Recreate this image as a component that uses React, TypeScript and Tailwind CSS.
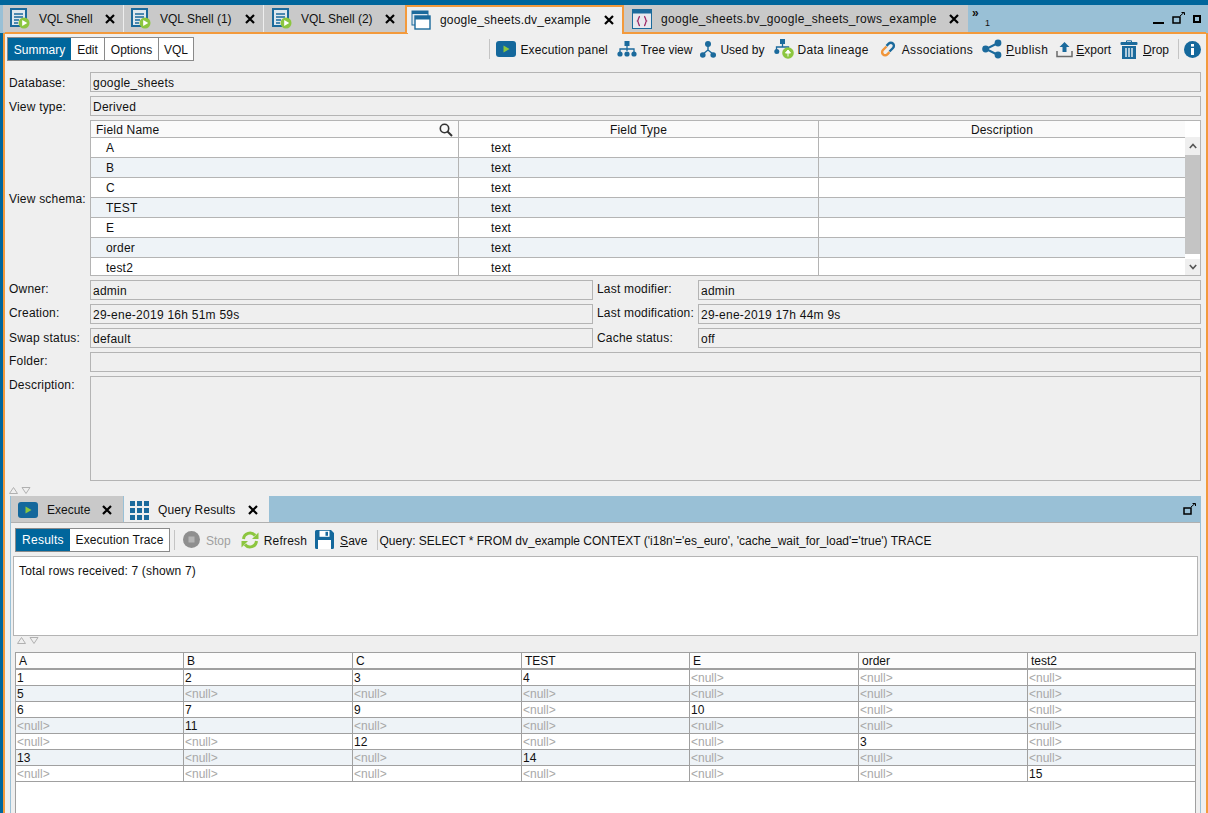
import type { ReactNode } from 'react';

const BLUE = '#1b6a9c';
const GREEN = '#8cc63f';

function ShellIcon() {
  return (
    <svg width="20" height="21" viewBox="0 0 20 21" className="shrink-0">
      <rect x="1" y="1" width="15" height="17" fill="#dfe8ee" stroke={BLUE} strokeWidth="2" />
      <path d="M4 6h9M4 9h9M4 12h5M4 15h4" stroke={BLUE} strokeWidth="1.6" />
      <circle cx="14" cy="15" r="5.5" fill={GREEN} />
      <path d="M12.2 12l5 3-5 3z" fill="#fff" />
    </svg>
  );
}

function ViewIcon() {
  return (
    <svg width="20" height="20" viewBox="0 0 20 20" className="shrink-0">
      <rect x="1" y="1" width="16" height="14" fill="#dce6ee" stroke={BLUE} strokeWidth="1" />
      <rect x="1" y="1" width="16" height="3" fill={BLUE} />
      <rect x="4" y="6" width="15" height="13" fill="#fff" stroke={BLUE} strokeWidth="1.4" />
      <rect x="4" y="6" width="15" height="3.5" fill={BLUE} />
    </svg>
  );
}

function BaseViewIcon() {
  return (
    <svg width="20" height="20" viewBox="0 0 20 20" className="shrink-0">
      <rect x="0.5" y="0.5" width="19" height="19" fill="#e8e8ee" stroke={BLUE} />
      <rect x="0.5" y="0.5" width="19" height="4" fill={BLUE} />
      <path d="M8 7.5c-2 0-1 3.500-2.500 4.500 1.500 1 .5 4.500 2.500 4.500M12 7.500c2 0 1 3.500 2.500 4.500-1.500 1-.5 4.500-2.500 4.500" fill="none" stroke="#a02a66" strokeWidth="1.3" />
    </svg>
  );
}

function PlayBox() {
  return (
    <svg width="20" height="16" viewBox="0 0 20 16" className="shrink-0">
      <rect width="20" height="16" rx="3" fill="#14689c" />
      <path d="M7.500 4.500l6 3.500-6 3.500z" fill={GREEN} />
    </svg>
  );
}

function TreeIcon() {
  return (
    <svg width="20" height="16" viewBox="0 0 20 16" className="shrink-0">
      <rect x="7.500" y="0" width="5" height="5" fill={BLUE} />
      <path d="M10 5v5M3 11V8h14v3" fill="none" stroke={BLUE} strokeWidth="1.300" />
      <circle cx="3" cy="13" r="2.600" fill={BLUE} />
      <circle cx="10" cy="13" r="2.600" fill={BLUE} />
      <circle cx="17" cy="13" r="2.600" fill={BLUE} />
    </svg>
  );
}

function UsedByIcon() {
  return (
    <svg width="16" height="17" viewBox="0 0 16 17" className="shrink-0">
      <circle cx="8" cy="3" r="3" fill={BLUE} />
      <path d="M8 5v4L3 13M8 9l5 4" fill="none" stroke={BLUE} strokeWidth="1.400" />
      <circle cx="2.800" cy="14" r="2.800" fill={BLUE} />
      <circle cx="13.200" cy="14" r="2.800" fill={BLUE} />
    </svg>
  );
}

function LineageIcon() {
  return (
    <svg width="20" height="20" viewBox="0 0 20 20" className="shrink-0">
      <rect x="6" y="0" width="5" height="5" fill={BLUE} />
      <path d="M8.500 5v3M2.500 11V8h12v2" fill="none" stroke={BLUE} strokeWidth="1.300" />
      <circle cx="2.800" cy="12.500" r="2.500" fill={BLUE} />
      <circle cx="14" cy="14" r="5.800" fill={GREEN} />
      <path d="M14 17.500v-5M11.500 14l2.500-3 2.500 3z" stroke="#fff" fill="#fff" strokeWidth="1" />
    </svg>
  );
}

function LinkIcon() {
  return (
    <svg width="18" height="18" viewBox="0 0 18 18" className="shrink-0">
      <path d="M7.500 6.500L4 10a3 3 0 0 0 4.300 4.300l2.200-2.200" fill="none" stroke="#f0953a" strokeWidth="2.400" />
      <path d="M10.500 11.500L14 8a3 3 0 0 0-4.300-4.300L7.500 5.900" fill="none" stroke={BLUE} strokeWidth="2.400" />
    </svg>
  );
}

function ShareIcon() {
  return (
    <svg width="20" height="20" viewBox="0 0 20 20" className="shrink-0">
      <path d="M16 4L4 10l12 6" fill="none" stroke={BLUE} strokeWidth="2" />
      <circle cx="16" cy="4" r="3.400" fill={BLUE} />
      <circle cx="3.600" cy="10" r="3.400" fill={BLUE} />
      <circle cx="16" cy="16" r="3.400" fill={BLUE} />
    </svg>
  );
}

function ExportIcon() {
  return (
    <svg width="17" height="17" viewBox="0 0 17 17" className="shrink-0">
      <path d="M8.500 1l5 5h-3v5h-4V6h-3z" fill={BLUE} />
      <path d="M1 10v5.500h15V10" fill="none" stroke="#6b6b6b" strokeWidth="1.500" />
    </svg>
  );
}

function TrashIcon() {
  return (
    <svg width="18" height="19" viewBox="0 0 18 19" className="shrink-0">
      <path d="M6.500 2V.8h5V2" fill="none" stroke={BLUE} />
      <rect x="0.500" y="2" width="17" height="3" rx="1" fill={BLUE} />
      <path d="M2 6h14v13H2z" fill={BLUE} />
      <path d="M6 8v9M9 8v9M12 8v9" stroke="#fff" strokeWidth="1.300" />
    </svg>
  );
}

function InfoIcon() {
  return (
    <svg width="17" height="17" viewBox="0 0 17 17" className="shrink-0">
      <circle cx="8.500" cy="8.500" r="8.500" fill="#14689c" />
      <rect x="7" y="3" width="3" height="2.600" fill="#fff" />
      <rect x="7" y="7" width="3" height="7" fill="#fff" />
    </svg>
  );
}

function CloseIcon() {
  return (
    <svg width="10" height="10" viewBox="0 0 10 10" className="shrink-0">
      <path d="M1 1l8 8M9 1l-8 8" stroke="#000" strokeWidth="2.200" />
    </svg>
  );
}

function GridIcon() {
  return (
    <svg width="19" height="19" viewBox="0 0 19 19" className="shrink-0">
      {[0, 7, 14].map(x =>
        [0, 7, 14].map(y => <rect key={`${x}-${y}`} x={x} y={y} width="5" height="5" fill={BLUE} />)
      )}
    </svg>
  );
}

function StopIcon() {
  return (
    <svg width="17" height="17" viewBox="0 0 17 17" className="shrink-0">
      <circle cx="8.500" cy="8.500" r="8.500" fill="#8f8f8f" />
      <rect x="5.500" y="5.500" width="6" height="6" fill="#b5b5b5" />
    </svg>
  );
}

function RefreshIcon() {
  return (
    <svg width="18" height="18" viewBox="0 0 18 18" className="shrink-0">
      <path d="M2.500 8A6.500 6.500 0 0 1 14 4.500" fill="none" stroke={GREEN} strokeWidth="3" />
      <path d="M17.500 1.500V8H11z" fill={GREEN} />
      <path d="M15.500 10A6.500 6.500 0 0 1 4 13.500" fill="none" stroke={GREEN} strokeWidth="3" />
      <path d="M.500 16.500V10H7z" fill={GREEN} />
    </svg>
  );
}

function SaveIcon() {
  return (
    <svg width="19" height="19" viewBox="0 0 19 19" className="shrink-0">
      <path d="M0 1.500A1.500 1.500 0 0 1 1.500 0H16l3 3v14.500a1.500 1.500 0 0 1-1.500 1.500h-16A1.500 1.500 0 0 1 0 17.500z" fill="#14689c" />
      <rect x="4.500" y="0.800" width="10" height="6" fill="#fff" />
      <rect x="10.500" y="1.800" width="2.500" height="4" fill="#14689c" />
      <rect x="3" y="10" width="13" height="9" fill="#fff" />
    </svg>
  );
}

function TabTriangles() {
  return (
    <svg width="22" height="7" viewBox="0 0 22 7">
      <path d="M.5 6.500L4.500.5l4 6zM13 .5h8l-4 6z" fill="none" stroke="#b0b0b0" />
    </svg>
  );
}

function UndockIcon() {
  return (
    <svg width="13" height="12" viewBox="0 0 13 12">
      <rect x="1" y="5" width="7" height="6" fill="none" stroke="#000" strokeWidth="1.500" />
      <path d="M8 4l4-3.500M9.500.5H12.500V3" fill="none" stroke="#000" />
    </svg>
  );
}

function Tab({
  className,
  gap,
  label,
  icon,
}: {
  className: string;
  gap: string;
  label: string;
  icon: ReactNode;
}) {
  return (
    <div className={`flex items-center shrink-0 ${className}`}>
      {icon}
      <span className={`ml-[9px] ${gap} whitespace-nowrap`}>{label}</span>
      <CloseIcon />
    </div>
  );
}

function ToolItem({ icon, className, children }: { icon: ReactNode; className: string; children: ReactNode }) {
  return (
    <div className={`flex items-center whitespace-nowrap ${className}`}>
      {icon}
      <span className="pt-[2px]">{children}</span>
    </div>
  );
}

function Field({ value, className = '' }: { value?: string; className?: string }) {
  return (
    <div className={`h-[20px] border border-[#b4b4b4] bg-[#efefef] pl-[2px] leading-[20px] tracking-[0.25px] ${className}`}>{value}</div>
  );
}

const schema = ['A', 'B', 'C', 'TEST', 'E', 'order', 'test2'];

const rows: (string | null)[][] = [
  ['1', '2', '3', '4', null, null, null],
  ['5', null, null, null, null, null, null],
  ['6', '7', '9', null, '10', null, null],
  [null, '11', null, null, null, null, null],
  [null, null, '12', null, null, '3', null],
  ['13', null, null, '14', null, null, null],
  [null, null, null, null, null, null, '15'],
];

function Pair({ label, value, up = false }: { label: string; value: string; up?: boolean }) {
  return (
    <div className="flex min-w-0">
      <div className={`w-[101px] shrink-0 ${up ? 'leading-[19px]' : 'pt-[2px] leading-[16px]'}`}>{label}</div>
      <Field value={value} className="flex-1" />
    </div>
  );
}

export default function App() {
  return (
    <div className="w-[1208px] h-[813px] overflow-hidden flex flex-col bg-[#00669c] text-[12px] text-[#111] font-['Liberation_Sans',Arial,sans-serif]">
      <div className="h-[5px] shrink-0" />

      {/* top tabs */}
      <div className="h-[28px] shrink-0 flex bg-[#99c0d6] pl-[3px] relative">
        <Tab className="w-[121px] h-[27px] pl-[7px] bg-[#c9c9c9] border-r border-[#eee]" gap="mr-[11px] w-[55px]" label="VQL Shell" icon={<ShellIcon />} />
        <Tab className="w-[140px] h-[27px] pl-[7px] bg-[#c9c9c9] border-r border-[#eee]" gap="mr-[10px] w-[75px]" label="VQL Shell (1)" icon={<ShellIcon />} />
        <Tab className="w-[141px] h-[27px] pl-[8px] bg-[#c9c9c9]" gap="mr-[9px] w-[75px]" label="VQL Shell (2)" icon={<ShellIcon />} />
        <Tab className="w-[219px] h-[28px] pl-[4px] bg-[#efefef] border-x-2 border-t-2 border-[#f39a3c] z-10" gap="mr-[13px] w-[151px] tracking-[0.2px]" label="google_sheets.dv_example" icon={<ViewIcon />} />
        <Tab className="w-[344px] h-[27px] pl-[8px] bg-[#c9c9c9]" gap="mr-[11px] w-[277px] tracking-[0.3px]" label="google_sheets.bv_google_sheets_rows_example" icon={<BaseViewIcon />} />
        <div className="relative w-[20px] shrink-0 leading-none">
          <span className="absolute left-[4px] top-[2px] font-bold">»</span>
          <span className="absolute left-[17px] top-[14px] text-[9px]">1</span>
        </div>
        <div className="ml-auto flex items-start pr-[7px] pt-[7px]">
          <div className="w-[11px] h-[2px] bg-black mt-[10px] mr-[8px]" />
          <UndockIcon />
          <div className="w-[8px] h-[8px] border-2 border-black ml-[8px] mt-[3px]" />
        </div>
      </div>

      <div className="flex-1 min-h-0 flex">
        <div className="w-[3px] shrink-0" />
        <div className="flex-1 min-w-0 flex flex-col bg-[#efefef] border-x-2 border-[#f39a3c] relative">
          <div className="absolute left-0 right-0 -top-[1px] h-[2px] bg-[#f39a3c]" />
          <div className="absolute left-[403px] w-[214px] -top-[1px] h-[2px] bg-[#efefef] z-20" />

          {/* summary toolbar */}
          <div className="h-[24px] mt-[4px] shrink-0 flex items-center pl-[2px] pr-[5px]">
            <div className="flex h-[24px] border border-[#8a8a8a] bg-white">
              <div className="w-[63px] flex items-center justify-center pt-[1px] bg-[#00669c] text-white">Summary</div>
              <div className="w-[34px] flex items-center justify-center pt-[1px] border-r border-[#8a8a8a]">Edit</div>
              <div className="w-[54px] flex items-center justify-center pt-[1px] border-r border-[#8a8a8a]">Options</div>
              <div className="w-[34px] flex items-center justify-center pt-[1px]">VQL</div>
            </div>
            <div className="ml-auto w-px h-[20px] bg-[#c4c4c4] mr-[6px]" />
            <ToolItem icon={<PlayBox />} className="mr-[9px] gap-[4px] tracking-[0.13px]">Execution panel</ToolItem>
            <ToolItem icon={<TreeIcon />} className="mr-[8px] gap-[4px]">Tree view</ToolItem>
            <ToolItem icon={<UsedByIcon />} className="mr-[10px] gap-[4px]">Used by</ToolItem>
            <ToolItem icon={<LineageIcon />} className="mr-[10px] gap-[3px] tracking-[0.33px]">Data lineage</ToolItem>
            <ToolItem icon={<LinkIcon />} className="mr-[9px] gap-[5px] tracking-[0.33px]">Associations</ToolItem>
            <ToolItem icon={<ShareIcon />} className="mr-[8px] gap-[4px] tracking-[0.4px]"><u>P</u>ublish</ToolItem>
            <ToolItem icon={<ExportIcon />} className="mr-[9px] gap-[3px]"><u>E</u>xport</ToolItem>
            <ToolItem icon={<TrashIcon />} className="mr-[9px] gap-[5px]"><u>D</u>rop</ToolItem>
            <div className="w-px h-[20px] bg-[#c4c4c4] mr-[5px]" />
            <InfoIcon />
          </div>

          {/* form */}
          <div className="mt-[11px] pl-[4px] pr-[5px] flex flex-col gap-[4px] shrink-0 tracking-[0.2px]">
            <div className="flex items-center">
              <div className="w-[81px] shrink-0 pt-[1px]">Database:</div>
              <Field value="google_sheets" className="flex-1" />
            </div>
            <div className="flex items-center">
              <div className="w-[81px] shrink-0 pt-[1px]">View type:</div>
              <Field value="Derived" className="flex-1" />
            </div>
            <div className="flex items-center">
              <div className="w-[81px] shrink-0 pt-[2px]">View schema:</div>
              <div className="flex-1 h-[156px] border border-[#b4b4b4] bg-white flex">
                <div className="flex-1 min-w-0">
                  <div className="h-[17px] grid grid-cols-[368px_360px_1fr] bg-[#fafafa] border-b border-[#b4b4b4] leading-[18px]">
                    <div className="pl-[5px] border-r border-[#b4b4b4] flex items-center justify-between pr-[5px]">
                      Field Name
                      <svg width="14" height="14" viewBox="0 0 14 14">
                        <circle cx="5.500" cy="5.500" r="4.200" fill="none" stroke="#333" strokeWidth="1.600" />
                        <path d="M8.500 8.500l4.500 4.500" stroke="#333" strokeWidth="2" />
                      </svg>
                    </div>
                    <div className="text-center border-r border-[#b4b4b4]">Field Type</div>
                    <div className="text-center">Description</div>
                  </div>
                  {schema.map((f, i) => (
                    <div
                      key={f}
                      className={`grid grid-cols-[368px_360px_1fr] overflow-hidden leading-[20px] ${i < 6 ? 'h-[20px] border-b border-[#b4b4b4]' : 'h-[17px]'} ${i % 2 ? 'bg-[#eef3f7]' : 'bg-white'}`}
                    >
                      <div className="pl-[15px] border-r border-[#b4b4b4]">{f}</div>
                      <div className="pl-[32px] border-r border-[#b4b4b4]">text</div>
                      <div />
                    </div>
                  ))}
                </div>
                <div className="w-[15px] shrink-0 flex flex-col bg-white pt-[16px]">
                  <div className="h-[18px] bg-[#efefef] flex items-center justify-center">
                    <svg width="8" height="6" viewBox="0 0 8 6"><path d="M.8 5L4 1.500 7.200 5" fill="none" stroke="#555" strokeWidth="1.600" /></svg>
                  </div>
                  <div className="h-[99px] bg-[#c4c4c4]" />
                  <div className="h-[5px]" />
                  <div className="flex-1 bg-[#efefef] flex items-center justify-center">
                    <svg width="8" height="6" viewBox="0 0 8 6"><path d="M.8 1L4 4.500 7.200 1" fill="none" stroke="#555" strokeWidth="1.600" /></svg>
                  </div>
                </div>
              </div>
            </div>
            <div className="grid grid-cols-[588px_1fr] gap-y-[4px]">
              <div className="flex">
                <div className="w-[81px] shrink-0 leading-[19px]">Owner:</div>
                <Field value="admin" className="w-[503px]" />
              </div>
              <Pair label="Last modifier:" value="admin" up />
              <div className="flex">
                <div className="w-[81px] shrink-0 leading-[19px]">Creation:</div>
                <Field value="29-ene-2019 16h 51m 59s" className="w-[503px]" />
              </div>
              <Pair label="Last modification:" value="29-ene-2019 17h 44m 9s" up />
              <div className="flex items-center">
                <div className="w-[81px] shrink-0">Swap status:</div>
                <Field value="default" className="w-[503px]" />
              </div>
              <Pair label="Cache status:" value="off" />
            </div>
            <div className="flex">
              <div className="w-[81px] shrink-0 leading-[19px]">Folder:</div>
              <Field className="flex-1" />
            </div>
            <div className="flex">
              <div className="w-[81px] shrink-0 leading-[19px]">Description:</div>
              <div className="flex-1 h-[105px] border border-[#b4b4b4] bg-[#efefef]" />
            </div>
          </div>

          <div className="h-[15px] shrink-0 flex items-start pt-[6px] pl-[4px]">
            <TabTriangles />
          </div>

          {/* bottom panel */}
          <div className="flex-1 min-h-0 ml-[5px] mr-[5px] border-x border-[#99c0d6] flex flex-col">
            <div className="h-[27px] shrink-0 bg-[#99c0d6] border-b border-[#b0b0b0] flex items-end">
              <div className="w-[112px] h-[26px] bg-[#c9c9c9] flex items-center pl-[7px] pt-[2px] shrink-0">
                <PlayBox />
                <span className="ml-[9px] w-[55px]">Execute</span>
                <CloseIcon />
              </div>
              <div className="w-[145px] h-[26px] ml-px bg-[#efefef] flex items-center pl-[6px] pt-[2px] shrink-0">
                <GridIcon />
                <span className="ml-[9px] w-[90px] tracking-[0.1px]">Query Results</span>
                <CloseIcon />
              </div>
              <div className="ml-auto self-center mr-[4px] flex">
                <UndockIcon />
              </div>
            </div>

            <div className="h-[33px] shrink-0 flex items-center pl-[4px] whitespace-nowrap">
              <div className="flex h-[24px] border border-[#8a8a8a] bg-white">
                <div className="w-[54px] flex items-center justify-center pt-[1px] bg-[#00669c] text-white tracking-[0.25px]">Results</div>
                <div className="w-[99px] flex items-center justify-center pt-[1px] tracking-[0.13px]">Execution Trace</div>
              </div>
              <div className="w-px h-[20px] bg-[#c4c4c4] ml-[4px] mr-[8px]" />
              <StopIcon />
              <span className="ml-[6px] mr-[10px] pt-[2px] text-[#a0a0a0]">Stop</span>
              <RefreshIcon />
              <span className="ml-[5px] mr-[8px] pt-[2px] tracking-[0.2px]">Refresh</span>
              <SaveIcon />
              <span className="ml-[6px] mr-[10px] pt-[2px]"><u>S</u>ave</span>
              <div className="w-px h-[20px] bg-[#c4c4c4] mr-[1px]" />
              <span className="pt-[2px]">Query: SELECT * FROM dv_example CONTEXT ('i18n'='es_euro', 'cache_wait_for_load'='true') TRACE</span>
            </div>

            <div className="h-[80px] shrink-0 ml-[2px] mr-[2px] border border-[#b4b4b4] bg-white pl-[5px] pt-[6px] leading-[16px] tracking-[0.15px]">
              Total rows received: 7 (shown 7)
            </div>

            <div className="h-[16px] shrink-0 flex items-start pt-[1px] pl-[6px]">
              <TabTriangles />
            </div>

            <div className="flex-1 min-h-0 ml-[4px] mr-[4px] border-x border-[#a0a0a0] bg-white overflow-hidden">
              <div className="grid grid-cols-[168px_169px_169px_168px_169px_169px_1fr] h-[18px] border-t border-b-2 border-[#a0a0a0] bg-[#fcfcfc] leading-[16px]">
                {schema.map(h => (
                  <div key={h} className="pl-[3px] border-r border-[#a0a0a0] last:border-r-0">{h}</div>
                ))}
              </div>
              {rows.map((row, i) => (
                <div
                  key={i}
                  className={`grid grid-cols-[168px_169px_169px_168px_169px_169px_1fr] h-[16px] border-b border-[#a0a0a0] leading-[16px] ${i % 2 ? 'bg-[#eef3f7]' : 'bg-white'}`}
                >
                  {row.map((c, j) => (
                    <div key={j} className={`pl-[1px] border-r border-[#a0a0a0] last:border-r-0 ${c === null ? 'text-[#a8a8a8]' : ''}`}>
                      {c === null ? '<null>' : c}
                    </div>
                  ))}
                </div>
              ))}
            </div>
          </div>
        </div>
      </div>
    </div>
  );
}
